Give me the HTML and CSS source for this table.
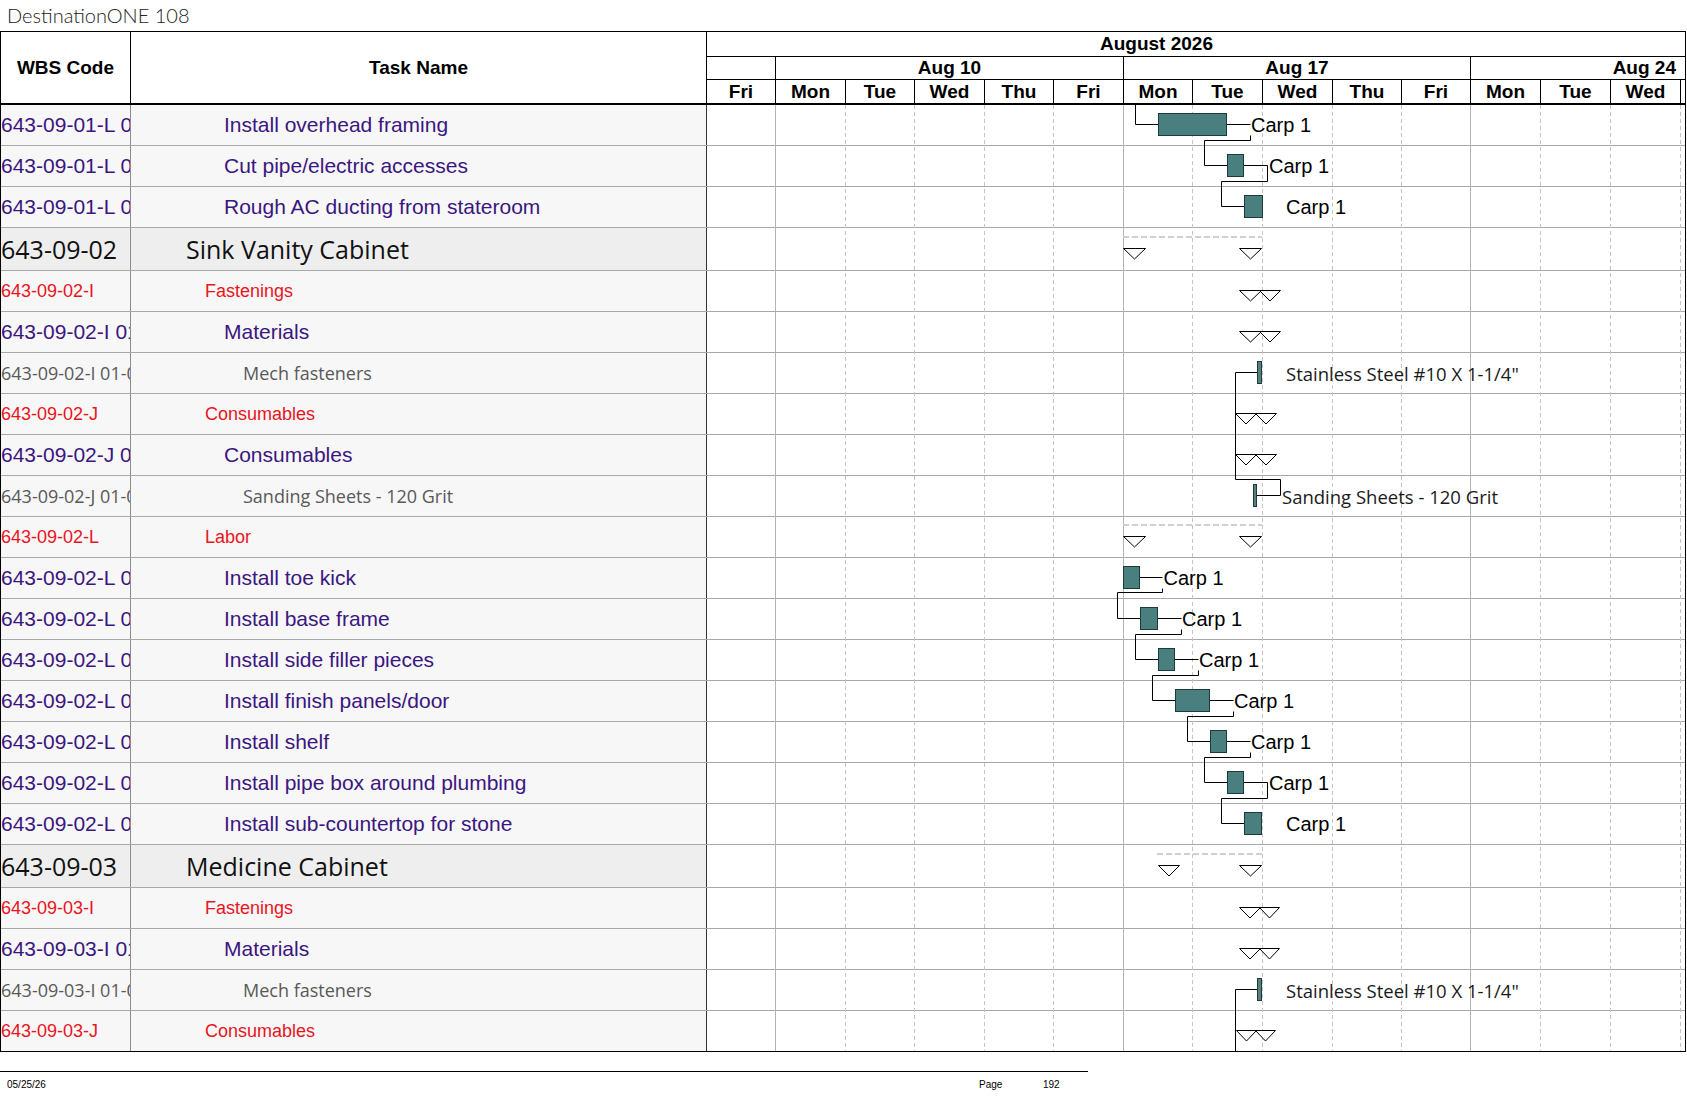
FILE: index.html
```html
<!DOCTYPE html>
<html>
<head>
<meta charset="utf-8">
<title>DestinationONE 108</title>
<link rel="stylesheet" href="styles.css">
</head>
<body>
<div class="title">DestinationONE 108</div>
<div class="sheet">
  <div class="left">
    <div class="hdr-left">
      <div class="h-wbs">WBS Code</div>
      <div class="h-task">Task Name</div>
    </div>
    <div class="row purple"><div class="wbs">643-09-01-L 01-01</div><div class="task">Install overhead framing</div></div>
    <div class="row purple"><div class="wbs">643-09-01-L 01-02</div><div class="task">Cut pipe/electric accesses</div></div>
    <div class="row purple"><div class="wbs">643-09-01-L 01-03</div><div class="task">Rough AC ducting from stateroom</div></div>
    <div class="row group"><div class="wbs">643-09-02</div><div class="task">Sink Vanity Cabinet</div></div>
    <div class="row red"><div class="wbs">643-09-02-I</div><div class="task">Fastenings</div></div>
    <div class="row purple"><div class="wbs">643-09-02-I 01</div><div class="task">Materials</div></div>
    <div class="row gray"><div class="wbs">643-09-02-I 01-01</div><div class="task">Mech fasteners</div></div>
    <div class="row red"><div class="wbs">643-09-02-J</div><div class="task">Consumables</div></div>
    <div class="row purple"><div class="wbs">643-09-02-J 01</div><div class="task">Consumables</div></div>
    <div class="row gray"><div class="wbs">643-09-02-J 01-01</div><div class="task">Sanding Sheets - 120 Grit</div></div>
    <div class="row red"><div class="wbs">643-09-02-L</div><div class="task">Labor</div></div>
    <div class="row purple"><div class="wbs">643-09-02-L 01-01</div><div class="task">Install toe kick</div></div>
    <div class="row purple"><div class="wbs">643-09-02-L 01-02</div><div class="task">Install base frame</div></div>
    <div class="row purple"><div class="wbs">643-09-02-L 01-03</div><div class="task">Install side filler pieces</div></div>
    <div class="row purple"><div class="wbs">643-09-02-L 01-04</div><div class="task">Install finish panels/door</div></div>
    <div class="row purple"><div class="wbs">643-09-02-L 01-05</div><div class="task">Install shelf</div></div>
    <div class="row purple"><div class="wbs">643-09-02-L 01-06</div><div class="task">Install pipe box around plumbing</div></div>
    <div class="row purple"><div class="wbs">643-09-02-L 01-07</div><div class="task">Install sub-countertop for stone</div></div>
    <div class="row group"><div class="wbs">643-09-03</div><div class="task">Medicine Cabinet</div></div>
    <div class="row red"><div class="wbs">643-09-03-I</div><div class="task">Fastenings</div></div>
    <div class="row purple"><div class="wbs">643-09-03-I 01</div><div class="task">Materials</div></div>
    <div class="row gray"><div class="wbs">643-09-03-I 01-01</div><div class="task">Mech fasteners</div></div>
    <div class="row red last"><div class="wbs">643-09-03-J</div><div class="task">Consumables</div></div>
  </div>
  <div class="gantt">
    <div class="g-head">
      <div class="g-month">August 2026</div>
      <div class="g-weeks">
        <div class="wk"></div>
        <div class="wk">Aug 10</div>
        <div class="wk">Aug 17</div>
        <div class="wk wk-right">Aug 24</div>
      </div>
      <div class="g-days">
        <div class="day">Fri</div><div class="day">Mon</div><div class="day">Tue</div><div class="day">Wed</div><div class="day">Thu</div><div class="day">Fri</div><div class="day">Mon</div><div class="day">Tue</div><div class="day">Wed</div><div class="day">Thu</div><div class="day">Fri</div><div class="day">Mon</div><div class="day">Tue</div><div class="day">Wed</div>
      </div>
    </div>
    <div class="g-body">
      <div class="g-row"></div><div class="g-row"></div><div class="g-row"></div>
      <div class="g-row g-group"></div>
      <div class="g-row"></div><div class="g-row"></div><div class="g-row"></div><div class="g-row"></div>
      <div class="g-row"></div><div class="g-row"></div><div class="g-row"></div><div class="g-row"></div>
      <div class="g-row"></div><div class="g-row"></div><div class="g-row"></div><div class="g-row"></div>
      <div class="g-row"></div><div class="g-row"></div>
      <div class="g-row g-group"></div>
      <div class="g-row"></div><div class="g-row"></div><div class="g-row"></div>
      <div class="g-row g-last"></div>
      <svg class="g-canvas" width="978" height="947" viewBox="707 105 978 947" xmlns="http://www.w3.org/2000/svg">
        <g class="grid-solid">
          <line x1="775.5" y1="105" x2="775.5" y2="1051"/>
          <line x1="1123.5" y1="105" x2="1123.5" y2="1051"/>
          <line x1="1470.5" y1="105" x2="1470.5" y2="1051"/>
        </g>
        <g class="grid-dash">
          <line x1="845.5" y1="105" x2="845.5" y2="1051"/>
          <line x1="914.5" y1="105" x2="914.5" y2="1051"/>
          <line x1="984.5" y1="105" x2="984.5" y2="1051"/>
          <line x1="1053.5" y1="105" x2="1053.5" y2="1051"/>
          <line x1="1192.5" y1="105" x2="1192.5" y2="1051"/>
          <line x1="1262.5" y1="105" x2="1262.5" y2="1051"/>
          <line x1="1332.5" y1="105" x2="1332.5" y2="1051"/>
          <line x1="1401.5" y1="105" x2="1401.5" y2="1051"/>
          <line x1="1540.5" y1="105" x2="1540.5" y2="1051"/>
          <line x1="1610.5" y1="105" x2="1610.5" y2="1051"/>
          <line x1="1680.5" y1="105" x2="1680.5" y2="1051"/>
        </g>
        <g class="summary">
          <line x1="1123" y1="237" x2="1262" y2="237"/>
          <line x1="1123" y1="525" x2="1262" y2="525"/>
          <line x1="1157" y1="854" x2="1263" y2="854"/>
        </g>
        <g class="links">
          <path d="M1135.5 105 V124.5 H1158.5"/>
          <path d="M1226.5 124.5 H1250.5"/>
          <path d="M1250.5 135.5 V140.5 H1204.5 V165.5 H1227.5"/>
          <path d="M1243.5 165.5 H1267.5 V181.5 H1221.5 V206.5 H1244.5"/>
          <path d="M1235.5 372.5 H1257.5"/>
          <path d="M1235.5 372.5 V479.5 H1280.5 V495.5 H1256.5"/>
          <path d="M1139.5 577.5 H1162.5"/>
          <path d="M1162.5 588.5 V592.5 H1117.5 V618.5 H1140.5"/>
          <path d="M1157.5 618.5 H1181.5"/>
          <path d="M1181.5 629.5 V634.5 H1135.5 V659.5 H1158.5"/>
          <path d="M1174.5 659.5 H1198.5"/>
          <path d="M1198.5 670.5 V675.5 H1152.5 V700.5 H1175.5"/>
          <path d="M1209.5 700.5 H1233.5"/>
          <path d="M1233.5 711.5 V716.5 H1187.5 V741.5 H1210.5"/>
          <path d="M1226.5 741.5 H1250.5"/>
          <path d="M1250.5 752.5 V757.5 H1204.5 V782.5 H1227.5"/>
          <path d="M1243.5 782.5 H1267.5 V798.5 H1221.5 V823.5 H1244.5"/>
          <path d="M1235.5 989.5 H1257.5"/>
          <path d="M1235.5 989.5 V1051"/>
        </g>
        <g class="bars">
          <rect x="1158.5" y="113.5" width="68" height="22"/>
          <rect x="1227.5" y="154.5" width="16" height="22"/>
          <rect x="1244.5" y="195.5" width="18" height="22"/>
          <rect x="1123.5" y="566.5" width="16" height="22"/>
          <rect x="1140.5" y="607.5" width="17" height="22"/>
          <rect x="1158.5" y="648.5" width="16" height="22"/>
          <rect x="1175.5" y="689.5" width="34" height="22"/>
          <rect x="1210.5" y="730.5" width="16" height="22"/>
          <rect x="1227.5" y="771.5" width="16" height="22"/>
          <rect x="1244.5" y="812.5" width="17" height="22"/>
        </g>
        <g class="thin">
          <rect x="1257.5" y="361.5" width="4" height="22"/>
          <rect x="1253.5" y="484.5" width="3" height="22"/>
          <rect x="1257.5" y="978.5" width="4" height="22"/>
        </g>
        <g class="tri">
          <polygon points="1123.5,248.5 1145.5,248.5 1134.5,259"/>
          <polygon points="1239.5,248.5 1261.5,248.5 1250.5,259"/>
          <polygon points="1239.5,290.5 1261.5,290.5 1250.5,301"/>
          <polygon points="1259.5,290.5 1280.5,290.5 1270,301"/>
          <polygon points="1239.5,331.5 1261.5,331.5 1250.5,342"/>
          <polygon points="1259.5,331.5 1280.5,331.5 1270,342"/>
          <polygon points="1235.5,413.5 1256.5,413.5 1246,424"/>
          <polygon points="1255.5,413.5 1276.5,413.5 1266,424"/>
          <polygon points="1235.5,454.5 1256.5,454.5 1246,465"/>
          <polygon points="1255.5,454.5 1276.5,454.5 1266,465"/>
          <polygon points="1123.5,536.5 1145.5,536.5 1134.5,547"/>
          <polygon points="1239.5,536.5 1261.5,536.5 1250.5,547"/>
          <polygon points="1158.5,865.5 1179.5,865.5 1169,876"/>
          <polygon points="1239.5,865.5 1261.5,865.5 1250.5,876"/>
          <polygon points="1239.5,907.5 1260.5,907.5 1250,918"/>
          <polygon points="1259.5,907.5 1279.5,907.5 1269.5,918"/>
          <polygon points="1239.5,948.5 1260.5,948.5 1250,959"/>
          <polygon points="1259.5,948.5 1279.5,948.5 1269.5,959"/>
          <polygon points="1236.5,1030.5 1256.5,1030.5 1246.5,1041"/>
          <polygon points="1255.5,1030.5 1275.5,1030.5 1265.5,1041"/>
        </g>
        <g class="lbl">
          <text x="1251" y="132">Carp 1</text>
          <text x="1269" y="173">Carp 1</text>
          <text x="1286" y="214">Carp 1</text>
          <text x="1163.5" y="585">Carp 1</text>
          <text x="1182" y="626">Carp 1</text>
          <text x="1199" y="667">Carp 1</text>
          <text x="1234" y="708">Carp 1</text>
          <text x="1251" y="749">Carp 1</text>
          <text x="1269" y="790">Carp 1</text>
          <text x="1286" y="831">Carp 1</text>
        </g>
        <g class="lbl-mat">
          <text x="1286" y="380.5">Stainless Steel #10 X 1-1/4&quot;</text>
          <text x="1282" y="503.5">Sanding Sheets - 120 Grit</text>
          <text x="1286" y="997.5">Stainless Steel #10 X 1-1/4&quot;</text>
        </g>
      </svg>
    </div>
  </div>
</div>
<div class="footer">
  <div class="f-date">05/25/26</div>
  <div class="f-page">Page</div>
  <div class="f-num">192</div>
</div>
</body>
</html>
```
FILE: styles.css
```css
* {
  box-sizing: border-box;
}

body {
  margin: 0;
  background: #ffffff;
  font-family: "Liberation Sans", Arial, sans-serif;
  color: #000;
}

.title {
  height: 31px;
  line-height: 30px;
  padding-left: 7px;
  font-family: Lato, "Open Sans", sans-serif;
  font-weight: 300;
  font-size: 20px;
  color: #222;
}

.sheet {
  display: flex;
  width: 1686px;
  border-top: 1px solid #000;
  border-left: 1px solid #000;
}

.left {
  width: 706px;
  flex: none;
}

.hdr-left {
  display: flex;
  height: 73px;
  border-bottom: 2px solid #000;
  font-weight: bold;
  font-size: 19px;
}

.h-wbs,
.h-task {
  display: flex;
  align-items: center;
  justify-content: center;
  border-right: 1px solid #000;
}

.h-wbs {
  width: 130px;
}

.h-task {
  width: 576px;
}

.row {
  display: flex;
  height: 41px;
  border-bottom: 1px solid #a8a8a8;
  background: #f7f7f7;
}

.row.group {
  height: 43px;
  background: #eeeeee;
}

.row.last {
  border-bottom-color: #000;
}

.wbs,
.task {
  display: flex;
  align-items: center;
  white-space: nowrap;
  overflow: hidden;
}

.wbs {
  width: 130px;
  border-right: 1px solid #8c8c8c;
}

.task {
  width: 576px;
  border-right: 1px solid #333;
}

.purple {
  color: #3b1680;
  font-size: 21px;
}

.purple .task {
  padding-left: 93px;
}

.red {
  color: #e8141e;
  font-size: 18px;
}

.red .task {
  padding-left: 74px;
}

.gray {
  color: #595959;
  font-family: "Open Sans", sans-serif;
  font-size: 18px;
}

.gray .task {
  padding-left: 112px;
}

.group {
  color: #111;
  font-family: "Open Sans", sans-serif;
  font-size: 25px;
}

.group .task {
  padding-left: 55px;
}

.gantt {
  width: 979px;
  flex: none;
  border-right: 1px solid #000;
}

.g-head {
  border-bottom: 2px solid #000;
  font-weight: bold;
  font-size: 19px;
}

.g-month {
  height: 25px;
  line-height: 24px;
  border-bottom: 1px solid #000;
  padding-left: 393px;
}

.g-weeks {
  display: grid;
  grid-template-columns: 69px 348px 347px 1fr;
  height: 23px;
  border-bottom: 1px solid #000;
}

.wk {
  line-height: 22px;
  text-align: center;
  border-right: 1px solid #000;
}

.wk-right {
  text-align: right;
  padding-right: 9px;
  border-right: none;
}

.g-days {
  display: grid;
  grid-template-columns: 69px 70px 69px 70px 69px 70px 69px 70px 70px 69px 69px 70px 70px 70px;
  height: 23px;
}

.day {
  line-height: 23px;
  text-align: center;
  border-right: 1px solid #000;
}

.g-body {
  position: relative;
}

.g-row {
  height: 41px;
  border-bottom: 1px solid #a8a8a8;
}

.g-row.g-group {
  height: 43px;
}

.g-row.g-last {
  border-bottom-color: #000;
}

.g-canvas {
  position: absolute;
  top: 0;
  left: 0;
  overflow: visible;
}

.grid-solid line {
  stroke: #b4b4b4;
  stroke-width: 1;
}

.grid-dash line {
  stroke: #c4c4c4;
  stroke-width: 1;
  stroke-dasharray: 4 3;
}

.summary line {
  stroke: #cfcfcf;
  stroke-width: 2;
  stroke-dasharray: 6 3;
}

.links path {
  fill: none;
  stroke: #000;
  stroke-width: 1;
}

.bars rect {
  fill: #4a7f80;
  stroke: #1d3b3b;
  stroke-width: 1;
}

.thin rect {
  fill: #587f7b;
  stroke: #1d3b3b;
  stroke-width: 1;
}

.tri polygon {
  fill: #fff;
  stroke: #000;
  stroke-width: 1;
}

.lbl text {
  font-family: "Liberation Sans", Arial, sans-serif;
  font-size: 20px;
  fill: #000;
}

.lbl-mat text {
  font-family: "Open Sans", sans-serif;
  font-size: 18.5px;
  fill: #1a1a1a;
}

.footer {
  width: 1088px;
  margin-top: 19px;
  border-top: 1px solid #000;
  display: grid;
  grid-template-columns: 979px 64px 1fr;
  padding-top: 7px;
  font-size: 10px;
  line-height: 12px;
  color: #000;
}

.f-date {
  padding-left: 7px;
}
```
